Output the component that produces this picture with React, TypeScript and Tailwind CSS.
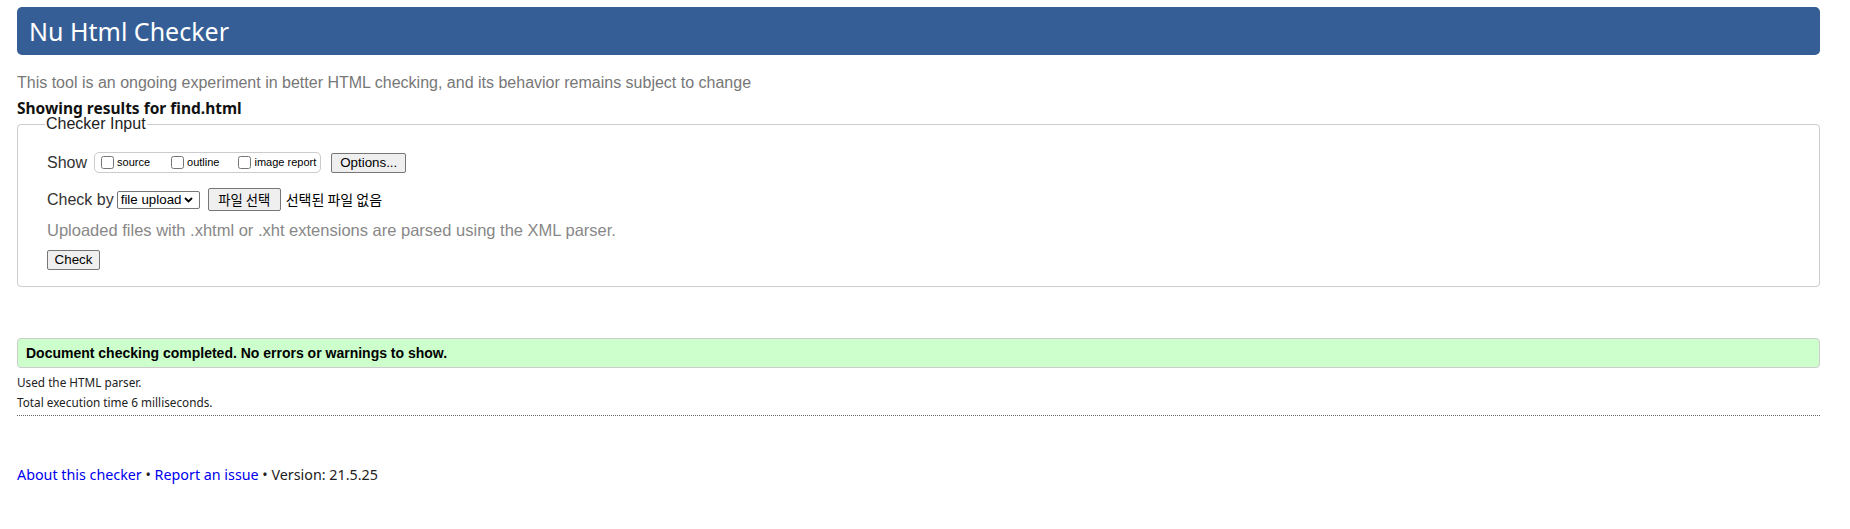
import React from "react";

function Chevron() {
  return (
    <svg width="9" height="6" viewBox="0 0 9 6" className="ml-[3px]">
      <path d="M1 1 L4.5 4.5 L8 1" fill="none" stroke="#000" strokeWidth="1.8" />
    </svg>
  );
}

export default function App() {
  const btn =
    "inline-flex items-center justify-center border border-[#767676] bg-[#efefef] rounded-[2px] text-[13.33px] text-black font-['Liberation_Sans',Arial,sans-serif]";
  return (
    <div className="min-h-[529px] bg-white pt-[7px] pl-[17px] pr-[30px] font-['Liberation_Sans',Arial,sans-serif] text-[#333]">
      <div className="h-[48px] rounded-[5px] bg-[#365e96] pl-[12px] text-white font-['Noto_Sans',sans-serif] text-[25px] leading-[48px]">
        Nu Html Checker
      </div>
      <p className="mt-[19px] text-[16px] leading-[18px] text-[#777]">
        This tool is an ongoing experiment in better HTML checking, and its behavior remains subject to change
      </p>
      <p className="mt-[8px] text-[15.5px] leading-[16px] font-bold text-[#111] font-['Noto_Sans',sans-serif]">
        Showing results for find.html
      </p>
      <fieldset className="mt-[1px] border border-[#cccccc] rounded-[4px] pl-[27px] pr-[10px] pb-[16px]">
        <legend className="px-[1px] text-[16px] leading-[14px] text-[#222]">Checker Input</legend>
        <div className="pl-[2px]">
          <div className="mt-[21px] flex items-center h-[21px]">
            <span className="text-[16px] leading-[18px]">Show</span>
            <div className="ml-[7px] h-[21px] flex items-center border border-[#cccccc] rounded-[5px] pl-[6px] pr-[4px] text-[11px] text-black">
              <input type="checkbox" className="w-[13px] h-[13px] mr-[3px]" />
              <span className="mr-[21px]">source</span>
              <input type="checkbox" className="w-[13px] h-[13px] mr-[3px]" />
              <span className="mr-[19px]">outline</span>
              <input type="checkbox" className="w-[13px] h-[13px] mr-[3px]" />
              <span>image report</span>
            </div>
            <button className={btn + " ml-[10px] h-[20px] w-[75px]"}>Options...</button>
          </div>
          <div className="mt-[15px] flex items-center h-[23px]">
            <span className="text-[16px] leading-[18px]">Check by</span>
            <div className="ml-[3px] h-[18px] w-[83px] flex items-center border border-[#767676] rounded-[2px] pl-[3px] text-[13.33px] text-black">
              <span>file upload</span>
              <Chevron />
            </div>
            <button className={btn + " ml-[8px] h-[23px] w-[73px]"}>
              <span className="font-['Noto_Sans_CJK_KR',sans-serif]">파일 선택</span>
            </button>
            <span className="ml-[5px] text-[14px] text-black font-['Noto_Sans_CJK_KR',sans-serif]">선택된 파일 없음</span>
          </div>
          <p className="mt-[10px] text-[16.5px] leading-[18px] text-[#888]">
            Uploaded files with .xhtml or .xht extensions are parsed using the XML parser.
          </p>
          <div className="mt-[11px] flex">
            <button className={btn + " h-[20px] w-[53px]"}>Check</button>
          </div>
        </div>
      </fieldset>
      <div className="mt-[51px] h-[30px] flex items-center border border-[#cccccc] bg-[#ccffcc] rounded-[4px] pl-[8px] text-[14px] font-bold text-black">
        Document checking completed. No errors or warnings to show.
      </div>
      <div className="mt-[4px] font-['Noto_Sans',sans-serif] text-[11.75px] leading-[20px] text-[#222]">
        <p>Used the HTML parser.</p>
        <p>Total execution time 6 milliseconds.</p>
      </div>
      <div className="mt-[3px] border-t border-dotted border-[#666]" />
      <p className="mt-[49px] font-['Noto_Sans',sans-serif] text-[14.3px] leading-[20px] text-[#222]">
        <a href="#" className="text-[#0000ee]">About this checker</a>
        {" • "}
        <a href="#" className="text-[#0000ee]">Report an issue</a>
        {" • Version: 21.5.25"}
      </p>
    </div>
  );
}
